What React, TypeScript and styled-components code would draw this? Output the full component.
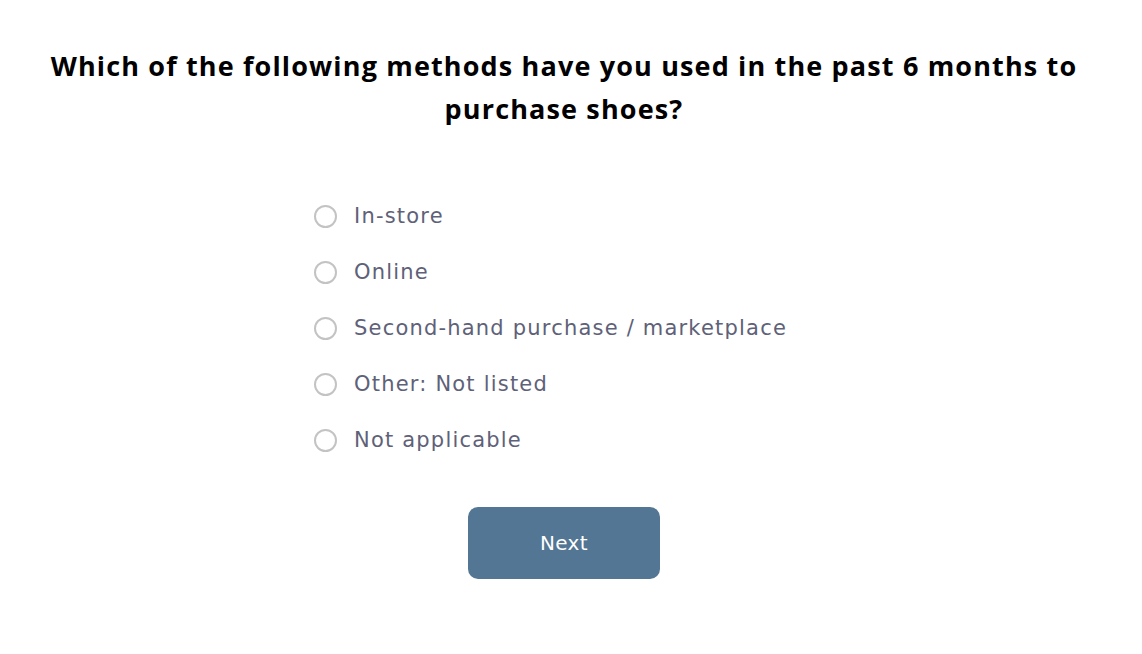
import React, { useState } from "react";
import styled, { createGlobalStyle } from "styled-components";

const Global = createGlobalStyle`
  html, body { margin: 0; padding: 0; background: #ffffff; }
  body { font-family: "DejaVu Sans", "Open Sans", sans-serif; }
  * { box-sizing: border-box; }
`;

const Page = styled.main`
  width: 1128px;
  padding: 44px 30px 0;
  display: flex;
  flex-direction: column;
  align-items: center;
`;

const Title = styled.h1`
  margin: 0;
  font-family: "Open Sans", "Noto Sans", sans-serif;
  font-size: 27px;
  font-weight: 700;
  letter-spacing: 1.15px;
  line-height: 43px;
  color: #000000;
  text-align: center;
  max-width: 1068px;
`;

const Options = styled.div`
  width: 500px;
  margin-top: 70px;
  display: flex;
  flex-direction: column;
  gap: 24px;
`;

const Option = styled.label`
  display: flex;
  align-items: center;
  gap: 17px;
  height: 32px;
  cursor: pointer;
  font-size: 21px;
  letter-spacing: 1.2px;
  color: #5e6178;
`;

const Radio = styled.span<{ $checked: boolean }>`
  width: 23px;
  height: 23px;
  border-radius: 50%;
  border: 2px solid #c3c3c3;
  flex-shrink: 0;
  display: flex;
  align-items: center;
  justify-content: center;
  &::after {
    content: "";
    width: 11px;
    height: 11px;
    border-radius: 50%;
    background: ${(p) => (p.$checked ? "#527693" : "transparent")};
  }
`;

const Button = styled.button`
  margin-top: 51px;
  width: 192px;
  height: 72px;
  border: none;
  border-radius: 10px;
  background: #527693;
  color: #ffffff;
  font-family: inherit;
  font-size: 20px;
  font-weight: 400;
  letter-spacing: 0.3px;
  cursor: pointer;
`;

const items = [
  "In-store",
  "Online",
  "Second-hand purchase / marketplace",
  "Other: Not listed",
  "Not applicable",
];

export default function App() {
  const [sel, setSel] = useState<number | null>(null);
  return (
    <>
      <Global />
      <Page>
        <Title>
          Which of the following methods have you used in the past 6 months to
          purchase shoes?
        </Title>
        <Options>
          {items.map((t, i) => (
            <Option key={t} onClick={() => setSel(i)}>
              <Radio $checked={sel === i} />
              {t}
            </Option>
          ))}
        </Options>
        <Button>Next</Button>
      </Page>
    </>
  );
}
